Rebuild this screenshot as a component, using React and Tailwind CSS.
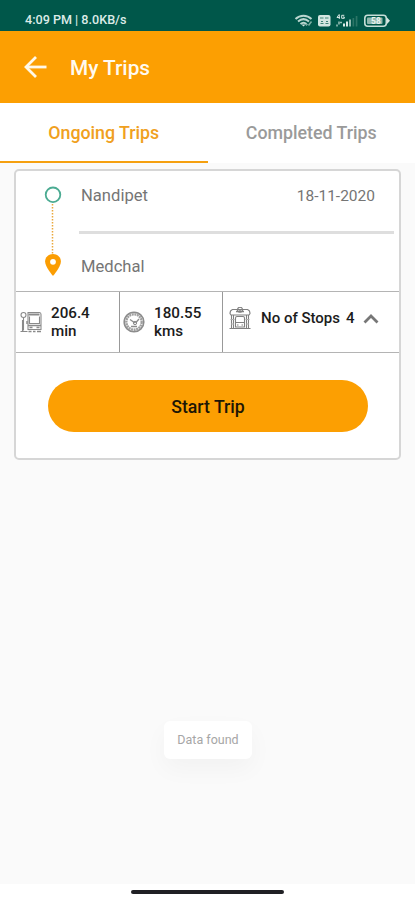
const trip = {
	from: 'Nandipet',
	to: 'Medchal',
	date: '18-11-2020',
	stops: 4,
};

function StatusIcons() {
	return (
		<svg width="100" height="16" viewBox="0 0 100 16" fill="none">
			{/* wifi */}
			<g stroke="#b9d6cf" strokeWidth="2">
				<path d="M1.500 7C6 2.700 13 2.700 17.500 7" />
				<path d="M4 9.500C7.500 6.500 11.500 6.500 15 9.500" />
				<path d="M6.500 12C8.500 10.300 10.500 10.300 12.500 12" />
			</g>
			<path d="M7.500 12.500h4l-2 2z" fill="#d5e6e1" />
			<path d="M12 13.500l1.500-1.500M14.500 13.500l3-4" stroke="#7fb0a5" strokeWidth="1.500" />
			{/* volte */}
			<rect x="24" y="3" width="12.500" height="11.500" rx="2" fill="#d3e6e1" />
			<path d="M26 6h3.500M31 6h3.500M26.500 11.500h3M31.500 11.500h3M27 9.500h2M32 9.500h2" stroke="#3f8377" strokeWidth="1.200" />
			{/* signal */}
			<path d="M45 2.500l-2 3h3M45.300 2.500v4.500M50.300 3.300h-2.600v3h2.600V5h-1.300" stroke="#d5e6e1" strokeWidth="1" />
			<path d="M43 14.500v-2M45 12.500v-3M46 10.500h2" stroke="#9cc3ba" strokeWidth="1.500" />
			<path d="M49 11.500h2v3h-2zM52 9.500h2v5h-2z" fill="#dcebe7" />
			<path d="M55 7.500h2v7h-2z" fill="#8fb8ae" />
			<path d="M58.500 6h1.700v8.500h-1.700zM61.700 4h1.700v10.500h-1.700z" fill="#2c7567" />
			{/* battery */}
			<rect x="70.800" y="3.300" width="21.500" height="10.900" rx="3" stroke="#c6ded8" strokeWidth="1.600" />
			<rect x="73" y="5.500" width="15.500" height="6.500" rx="1" fill="#8fb8ae" />
			<path d="M93 5.500l3 3.200-3 3.200z" fill="#d5e6e1" />
			<text x="82" y="11.800" textAnchor="middle" fontSize="8.500" fontWeight="700" fill="#e9f3f0">58</text>
		</svg>
	);
}

function BackArrow() {
	return (
		<svg width="24" height="24" viewBox="0 0 24 24" fill="none" stroke="#fff8e8" strokeWidth="2.800">
			<path d="M23.500 12H3" />
			<path d="M13 2L3 12l10 10" />
		</svg>
	);
}

function BusIcon() {
	return (
		<svg width="22" height="22" viewBox="0 0 22 22" fill="none" stroke="#8a8a8a" strokeWidth="1.100">
			<circle cx="3.500" cy="4" r="2.500" />
			<path d="M3.500 6.500v13M0.500 20.500h7M2.500 9v11" />
			<path d="M8 1.500h11.500c1 0 1.500 1 1.500 2v15H8z" />
			<path d="M8.500 3.500h11" strokeWidth="2" />
			<path d="M9.500 5.500v7h10v-7" />
			<path d="M8 14.500h13M9.500 16.500h3M16.500 16.500h3M7 10v3" strokeWidth="1.400" />
			<path d="M8.500 20.500h3M13 20.500h2.500M17 20.500h4" strokeWidth="1.500" />
		</svg>
	);
}

function GaugeIcon() {
	return (
		<svg width="22" height="22" viewBox="0 0 22 22" fill="none" stroke="#8c8c8c">
			<circle cx="11" cy="11" r="9.800" strokeWidth="1.600" />
			<circle cx="11" cy="11" r="7.700" strokeWidth="2.400" strokeDasharray="2 0.600" stroke="#a0a0a0" />
			<path d="M7 8.500l5 3.500M12.500 12L16 8" strokeWidth="1.300" />
			<circle cx="12" cy="12" r="1.700" strokeWidth="1" />
			<path d="M8 15.500h6" strokeWidth="1.500" />
		</svg>
	);
}

function StationIcon() {
	return (
		<svg width="22" height="22" viewBox="0 0 22 22" fill="none" stroke="#808080" strokeWidth="1.100">
			<circle cx="11" cy="2.800" r="2.500" />
			<path d="M10 2.800h2M7 4.500h8" strokeWidth="1.500" />
			<path d="M3.500 2.500h4M14.500 2.500h4C20 3 21 5 21 6.500L20 8H2L1 6.500C1 5 2 3 3.500 2.500z" />
			<path d="M2.500 8v13M4.500 8v13M17.500 8v13M19.500 8v13" />
			<path d="M6.500 20V11c0-1 .5-1.500 1.500-1.500h6c1 0 1.500.5 1.500 1.500v9z" />
			<path d="M6.500 15.500h9M8 18h1.500M12.500 18H14M0.500 21.500h21" />
			<path d="M1.500 12.500h4M16.500 12.500h4M2 17h3M17 17h3" stroke="#aaa" />
		</svg>
	);
}

function RouteLine() {
	return (
		<svg width="18" height="92" viewBox="0 0 18 92" fill="none">
			<circle cx="9" cy="9.800" r="7.300" stroke="#4bab92" strokeWidth="1.800" />
			<path d="M8.500 19v50" stroke="#eaa83c" strokeWidth="1.500" strokeDasharray="1.500 1.500" />
			<path d="M9 69c-4.500 0-7.900 3.300-7.900 7.500C1.100 82 9 91 9 91s7.900-9 7.900-14.500C16.900 72.300 13.500 69 9 69z" fill="#fb9d02" />
			<circle cx="9" cy="76.800" r="2.900" fill="white" />
		</svg>
	);
}

export default function App() {
	return (
		<div className="w-full h-[900px] flex flex-col bg-[#fafafa] font-['Roboto',sans-serif] overflow-hidden">
			<div className="h-[31px] shrink-0 bg-[#00574a] flex items-end justify-between pl-[25px] pr-[21px] pb-[3px]">
				<span className="text-[12.6px] leading-[16px] font-medium text-[#dcebe7]">4:09 PM | 8.0KB/s</span>
				<StatusIcons />
			</div>

			<header className="h-[72px] shrink-0 bg-[#fc9f02] flex items-center pl-[23px] gap-[23px]">
				<BackArrow />
				<h1 className="text-[20.8px] font-medium text-[#fffaf0] pt-[3px]">My Trips</h1>
			</header>

			<nav className="h-[60px] shrink-0 bg-white grid grid-cols-2 text-[17.8px] font-medium text-center leading-[59px]">
				<div className="h-[60px] text-[#f0a020] border-b-2 border-[#f5a010]">Ongoing Trips</div>
				<div className="text-[#9a9a9a]">Completed Trips</div>
			</nav>

			<main className="flex-1 pt-[6px] pl-[14px] pr-[14px]">
				<section className="h-[291px] bg-white border-2 border-[#d6d6d6] rounded-[5px]">
					<div className="h-[120px] flex pt-[14px] pl-[28px]">
						<RouteLine />
						<div className="flex-1 ml-[17px] mr-[5px] pt-[1px] text-[16.6px] leading-[20px] text-[#757575]">
							<div className="flex justify-between pl-[2px] pr-[19px]">
								<span>{trip.from}</span>
								<span className="text-[15.5px]">{trip.date}</span>
							</div>
							<div className="h-[3px] mt-[25px] mb-[23px] bg-[#dedede]" />
							<div className="pl-[2px]">{trip.to}</div>
						</div>
					</div>

					<div className="h-[62px] flex border-y border-[#b4b4b4] text-[15.2px] leading-[18px] font-medium text-[#1c1c1c]">
						<div className="w-[104px] flex items-center gap-[9px] pl-[4px] border-r border-[#999]">
							<BusIcon />
							<div>206.4<br />min</div>
						</div>
						<div className="w-[103px] flex items-center gap-[9px] pl-[3px] border-r border-[#999]">
							<GaugeIcon />
							<div>180.55<br />kms</div>
						</div>
						<div className="flex-1 flex items-center pl-[6px] pb-[9px] text-[15px]">
							<StationIcon />
							<span className="ml-[10px]">No of Stops</span>
							<span className="ml-[6px]">{trip.stops}</span>
							<svg className="ml-[8px]" width="16" height="12" viewBox="0 0 16 12" fill="none" stroke="#777" strokeWidth="2.800">
								<path d="M1.500 10.500L8 4l6.500 6.500" />
							</svg>
						</div>
					</div>

					<button className="block w-[320px] h-[52px] mt-[27px] ml-[32px] pt-[3px] rounded-full bg-[#fc9f02] text-[17.7px] font-medium text-[#1d1605]">
						Start Trip
					</button>
				</section>

				<div className="w-[88px] h-[38px] mt-[261px] ml-[150px] flex items-center justify-center bg-white rounded-[6px] shadow-[0_10px_24px_rgba(0,0,0,0.035)] text-[12.5px] text-[#a6a6a6]">
					Data found
				</div>
			</main>

			<footer className="h-[16px] shrink-0 bg-white flex justify-center pt-[6px]">
				<div className="w-[153px] h-[4px] rounded-full bg-[#202024]" />
			</footer>
		</div>
	);
}
